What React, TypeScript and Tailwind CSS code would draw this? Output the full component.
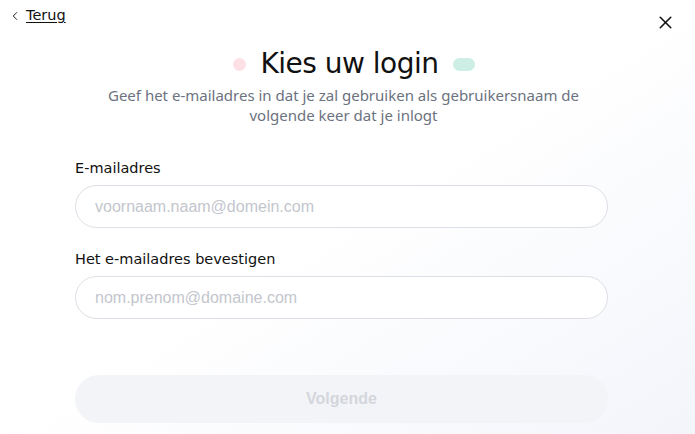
import React from 'react';
import { ChevronLeft, X } from 'lucide-react';

export default function App() {
  return (
    <div className="relative w-[695px] h-[434px] overflow-hidden bg-gradient-to-br from-white via-white to-[#f3f5fb] font-['Lato',sans-serif]">
      <header className="flex items-start justify-between pl-[8px] pr-[19px] pt-[5px]">
        <button className="flex items-center gap-[4px] text-[16px] text-[#111]">
          <ChevronLeft className="h-[14px] w-[14px]" strokeWidth={1.6} />
          <span className="underline underline-offset-2 font-['DejaVu_Sans',sans-serif] text-[14.5px]">Terug</span>
        </button>
        <button className="mt-[7px]" aria-label="Sluiten">
          <X className="h-[21px] w-[21px] text-[#111]" strokeWidth={1.8} />
        </button>
      </header>

      <div className="flex flex-col items-center mt-[12px]">
        <div className="flex items-center gap-[14px] pl-[13px]">
          <span className="h-[13px] w-[13px] rounded-full bg-[#fde0e5]" />
          <h1 className="text-[28px] leading-[38px] text-[#111] font-['DejaVu_Sans',sans-serif] tracking-[-0.5px]">Kies uw login</h1>
          <span className="h-[13px] w-[22px] rounded-full bg-[#cdeee4]" />
        </div>
        <p className="mt-[2px] mr-[8px] w-[504px] text-center text-[15px] leading-[20px] text-[#6b7280] font-['Noto_Sans',sans-serif]">
          Geef het e-mailadres in dat je zal gebruiken als gebruikersnaam de volgende keer dat je inlogt
        </p>
      </div>

      <form className="ml-[75px] w-[533px] mt-[33px] flex flex-col">
        <label className="text-[14.5px] leading-[20px] text-[#111] mb-[7px] font-['DejaVu_Sans',sans-serif]">E-mailadres</label>
        <input
          className="h-[43px] rounded-full border border-[#dcdfe5] bg-white px-[19px] text-[16px] font-['Liberation_Sans',sans-serif] placeholder:text-[#c3c6cd] outline-none"
          placeholder="voornaam.naam@domein.com"
        />
        <label className="mt-[21px] text-[14.5px] leading-[20px] text-[#111] mb-[7px] font-['DejaVu_Sans',sans-serif]">Het e-mailadres bevestigen</label>
        <input
          className="h-[43px] rounded-full border border-[#dcdfe5] bg-white px-[19px] text-[16px] font-['Liberation_Sans',sans-serif] placeholder:text-[#c3c6cd] outline-none"
          placeholder="nom.prenom@domaine.com"
        />
        <button
          type="button"
          disabled
          className="mt-[56px] h-[48px] rounded-full bg-[#f3f4f7] text-[16px] font-semibold text-[#d4d6dc] font-['Liberation_Sans',sans-serif]"
        >
          Volgende
        </button>
      </form>
    </div>
  );
}
